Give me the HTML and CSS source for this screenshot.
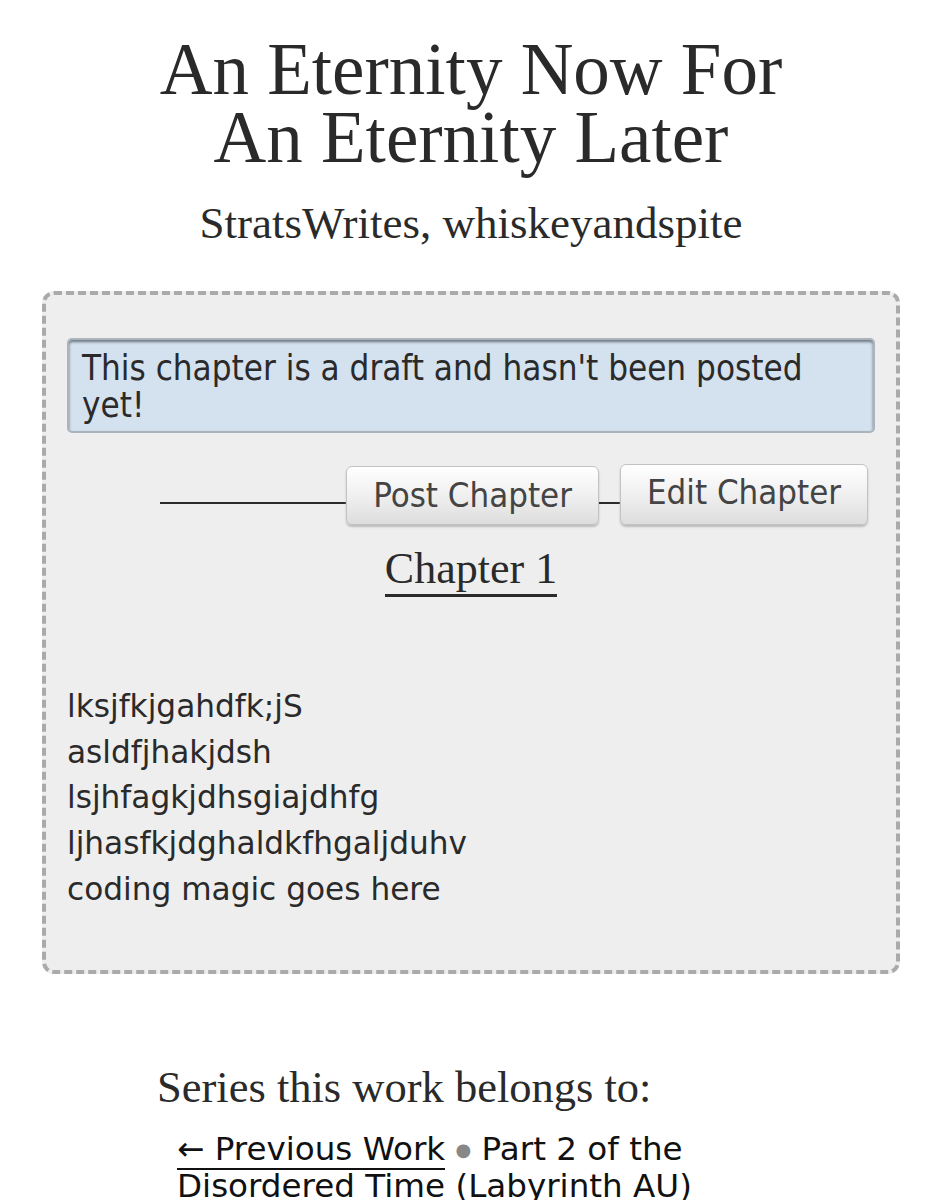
FILE: index.html
```html
<!DOCTYPE html>
<html>
<head>
<meta charset="utf-8">
<link rel="stylesheet" href="styles.css">
</head>
<body>
<div class="page">
  <h2 class="title">An Eternity Now For<br>An Eternity Later</h2>
  <h3 class="byline">StratsWrites, whiskeyandspite</h3>

  <div class="chapter-box">
    <p class="notice">This chapter is a draft and hasn't been posted yet!</p>
    <div class="actions">
      <span class="rule long"></span>
      <button class="btn">Post Chapter</button>
      <span class="rule short"></span>
      <button class="btn btn-edit">Edit Chapter</button>
    </div>
    <h3 class="chapter-title"><a href="#">Chapter 1</a></h3>
    <div class="userstuff">
      <p>lksjfkjgahdfk;jS<br>asldfjhakjdsh<br>lsjhfagkjdhsgiajdhfg<br>ljhasfkjdghaldkfhgaljduhv<br>coding magic goes here</p>
    </div>
  </div>

  <div class="series">
    <h3 class="series-heading">Series this work belongs to:</h3>
    <p class="series-line"><a href="#" class="prev">← Previous Work</a> <span class="divider">●</span> Part 2 of the<br><a href="#" class="series-name">Disordered Time (Labyrinth AU)</a></p>
  </div>
</div>
</body>
</html>
```

FILE: styles.css
```css
html, body {
  margin: 0;
  padding: 0;
  background: #fff;
  color: #2a2a2a;
}

.page {
  width: 942px;
}

.title {
  margin: 0;
  padding-top: 36px;
  text-align: center;
  font-family: "Liberation Serif", serif;
  font-weight: normal;
  font-size: 73px;
  line-height: 68px;
  color: #2a2a2a;
}

.byline {
  margin: 26px 0 0;
  text-align: center;
  font-family: "Liberation Serif", serif;
  font-weight: normal;
  font-size: 45px;
  line-height: 50px;
  color: #2a2a2a;
}

.chapter-box {
  margin: 43px 42px 0 42px;
  box-sizing: border-box;
  width: 858px;
  height: 683px;
  border: 4px dashed #aaa;
  border-radius: 12px;
  background: #eee;
  padding: 43px 21px 0 21px;
}

.notice {
  margin: 0;
  box-sizing: border-box;
  height: 95px;
  background: #d4e1ee;
  border: 2px solid #a9b4bd;
  border-radius: 5px;
  box-shadow: inset 0 2px 3px #6d747c;
  padding: 10px 13px 0;
  font-family: "DejaVu Sans Condensed", "DejaVu Sans", sans-serif;
  font-size: 34.7px;
  line-height: 37px;
  color: #2a2a2a;
}

.actions {
  margin-top: 31px;
  display: flex;
  align-items: flex-end;
  justify-content: flex-end;
  padding-right: 7px;
}

.rule {
  display: block;
  height: 2px;
  background: #2a2a2a;
  margin-bottom: 21px;
}
.rule.long { width: 186px; }
.rule.short { width: 21px; }

.btn {
  box-sizing: border-box;
  height: 59px;
  padding: 0 26px;
  border: 1px solid #c3c3c3;
  border-radius: 6px;
  background: linear-gradient(#fff 0%, #eee 55%, #ddd 100%);
  box-shadow: 0 2px 2px #bbb;
  font-family: "DejaVu Sans Condensed", "DejaVu Sans", sans-serif;
  font-size: 34.5px;
  color: #444;
  line-height: 57px;
}
.btn.btn-edit {
  height: 61px;
  line-height: 55px;
  padding-bottom: 4px;
}

.chapter-title {
  margin: 19px 0 0;
  text-align: center;
  font-family: "Liberation Serif", serif;
  font-weight: normal;
  font-size: 44px;
  line-height: 50px;
}
.chapter-title a {
  color: #2a2a2a;
  text-decoration: none;
  border-bottom: 3px solid #2a2a2a;
  padding-bottom: 1px;
}

.userstuff {
  margin-top: 90px;
}
.userstuff p {
  margin: 0;
  padding-left: 0;
  font-family: "DejaVu Sans", sans-serif;
  font-size: 31.2px;
  line-height: 45.7px;
  color: #2a2a2a;
}

.series {
  padding-left: 157px;
  margin-top: 90px;
}
.series-heading {
  margin: 0;
  font-family: "Liberation Serif", serif;
  font-weight: normal;
  font-size: 44.5px;
  line-height: 46px;
  color: #2a2a2a;
}
.series-line {
  margin: 21px 0 0 20px;
  font-family: "DejaVu Sans", sans-serif;
  font-size: 32.6px;
  line-height: 37px;
  color: #111;
}
.series-line a {
  color: #111;
  text-decoration: none;
}
.series-line .prev {
  border-bottom: 2px solid #111;
}
.divider {
  color: #888;
  font-size: 18px;
  vertical-align: 4px;
}
```
